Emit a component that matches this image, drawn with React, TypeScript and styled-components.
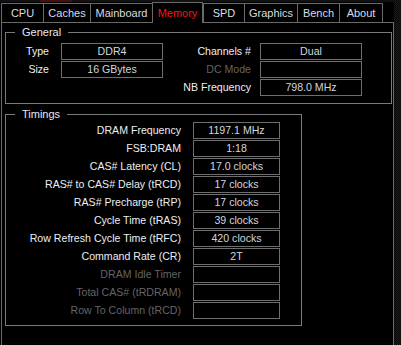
import { Fragment } from "react"
import styled, { createGlobalStyle } from "styled-components"

const GlobalStyle = createGlobalStyle`
  body {
    margin: 0;
    background: #000;
    font-family: "Liberation Sans", Arial, sans-serif;
    font-size: 10.6px;
    color: #eee;
  }
`

const Window = styled.div`
  display: flex;
  height: 345px;
  overflow: hidden;
  background: #000;
`

const Main = styled.div`
  display: flex;
  flex-direction: column;
  width: 394px;
`

const Grip = styled.div`
  flex: 1;
  background-color: #050505;
  background-image: repeating-conic-gradient(#1e1e1e 0 25%, #050505 0 50%);
  background-size: 2px 2px;
`

const TopStrip = styled.div`
  height: 2px;
  background: #111;
  display: flex;
`

const TitleMark = styled.div`
  margin-left: 40px;
  width: 32px;
  background: #4a0c0c;
`

const TabBar = styled.div`
  display: flex;
  align-items: flex-end;
  height: 20px;
  padding-left: 1px;
`

const Tab = styled.div<{ $w: number; $active?: boolean; $gap?: boolean }>`
  box-sizing: border-box;
  width: ${(p) => p.$w}px;
  height: ${(p) => (p.$active ? 21 : 19)}px;
  margin-left: ${(p) => (p.$gap ? 0 : -1)}px;
  margin-bottom: ${(p) => (p.$active ? -1 : 0)}px;
  padding-top: ${(p) => (p.$active ? 1 : 0)}px;
  border: 1px solid #6a6a6a;
  border-bottom: none;
  background: #000;
  position: relative;
  z-index: ${(p) => (p.$active ? 2 : 1)};
  color: ${(p) => (p.$active ? "#ff1010" : "#d8dce4")};
  font-size: 11px;
  text-align: center;
  line-height: 18px;
  white-space: nowrap;

  &:first-child {
    margin-left: 0;
  }
`

const Panel = styled.div`
  flex: 1;
  margin-left: 1px;
  border: 1px solid #6a6a6a;
  border-bottom: none;
  padding: 9px 1px 0 3px;
  display: flex;
  flex-direction: column;
  gap: 10px;
`

const Group = styled.div<{ $w?: number }>`
  position: relative;
  box-sizing: border-box;
  width: ${(p) => (p.$w ? `${p.$w}px` : "auto")};
  border: 1px solid #7a7a7a;
`

const Legend = styled.span`
  position: absolute;
  top: -7px;
  left: 9px;
  padding: 0 7px;
  background: #000;
  color: #e4e8f0;
  font-size: 11px;
  line-height: 13px;
`

const GeneralGrid = styled.div`
  display: grid;
  grid-template-columns: 55px 102px 97px 102px;
  grid-auto-rows: 17px;
  row-gap: 1px;
  padding: 10px 0 7px 0;
`

const TimingsGrid = styled.div`
  display: grid;
  grid-template-columns: 187px 87px;
  grid-auto-rows: 17px;
  row-gap: 1px;
  padding: 7px 0 6px 0;
`

const Label = styled.div<{ $pad: number; $off?: boolean }>`
  text-align: right;
  padding-right: ${(p) => p.$pad}px;
  line-height: 17px;
  white-space: nowrap;
  color: ${(p) => (p.$off ? "#646464" : "#eceef2")};
`

const Value = styled.div`
  box-sizing: border-box;
  border: 1px solid #6e6e6e;
  line-height: 15px;
  text-align: center;
  color: #d2d6de;
  white-space: nowrap;
`

const Empty = styled.div``

const tabs = [
  { name: "CPU", w: 43 },
  { name: "Caches", w: 48 },
  { name: "Mainboard", w: 63 },
  { name: "Memory", w: 51, active: true },
  { name: "SPD", w: 42, gap: true },
  { name: "Graphics", w: 54 },
  { name: "Bench", w: 43 },
  { name: "About", w: 44 },
]

const timings: { label: string; value: string; off?: boolean }[] = [
  { label: "DRAM Frequency", value: "1197.1 MHz" },
  { label: "FSB:DRAM", value: "1:18" },
  { label: "CAS# Latency (CL)", value: "17.0 clocks" },
  { label: "RAS# to CAS# Delay (tRCD)", value: "17 clocks" },
  { label: "RAS# Precharge (tRP)", value: "17 clocks" },
  { label: "Cycle Time (tRAS)", value: "39 clocks" },
  { label: "Row Refresh Cycle Time (tRFC)", value: "420 clocks" },
  { label: "Command Rate (CR)", value: "2T" },
  { label: "DRAM Idle Timer", value: "", off: true },
  { label: "Total CAS# (tRDRAM)", value: "", off: true },
  { label: "Row To Column (tRCD)", value: "", off: true },
]

const App = () => {
  return (
    <>
      <GlobalStyle />
      <Window>
        <Main>
          <TopStrip>
            <TitleMark />
          </TopStrip>
          <TabBar>
            {tabs.map((t) => (
              <Tab key={t.name} $w={t.w} $active={t.active} $gap={t.gap}>
                {t.name}
              </Tab>
            ))}
          </TabBar>
          <Panel>
            <Group>
              <Legend>General</Legend>
              <GeneralGrid>
                <Label $pad={12}>Type</Label>
                <Value>DDR4</Value>
                <Label $pad={9}>Channels #</Label>
                <Value>Dual</Value>

                <Label $pad={12}>Size</Label>
                <Value>16 GBytes</Value>
                <Label $pad={9} $off>
                  DC Mode
                </Label>
                <Value />

                <Empty />
                <Empty />
                <Label $pad={9}>NB Frequency</Label>
                <Value>798.0 MHz</Value>
              </GeneralGrid>
            </Group>
            <Group $w={297}>
              <Legend>Timings</Legend>
              <TimingsGrid>
                {timings.map((t) => (
                  <Fragment key={t.label}>
                    <Label $pad={12} $off={t.off}>
                      {t.label}
                    </Label>
                    <Value>{t.value}</Value>
                  </Fragment>
                ))}
              </TimingsGrid>
            </Group>
          </Panel>
        </Main>
        <Grip />
      </Window>
    </>
  )
}

export default App
